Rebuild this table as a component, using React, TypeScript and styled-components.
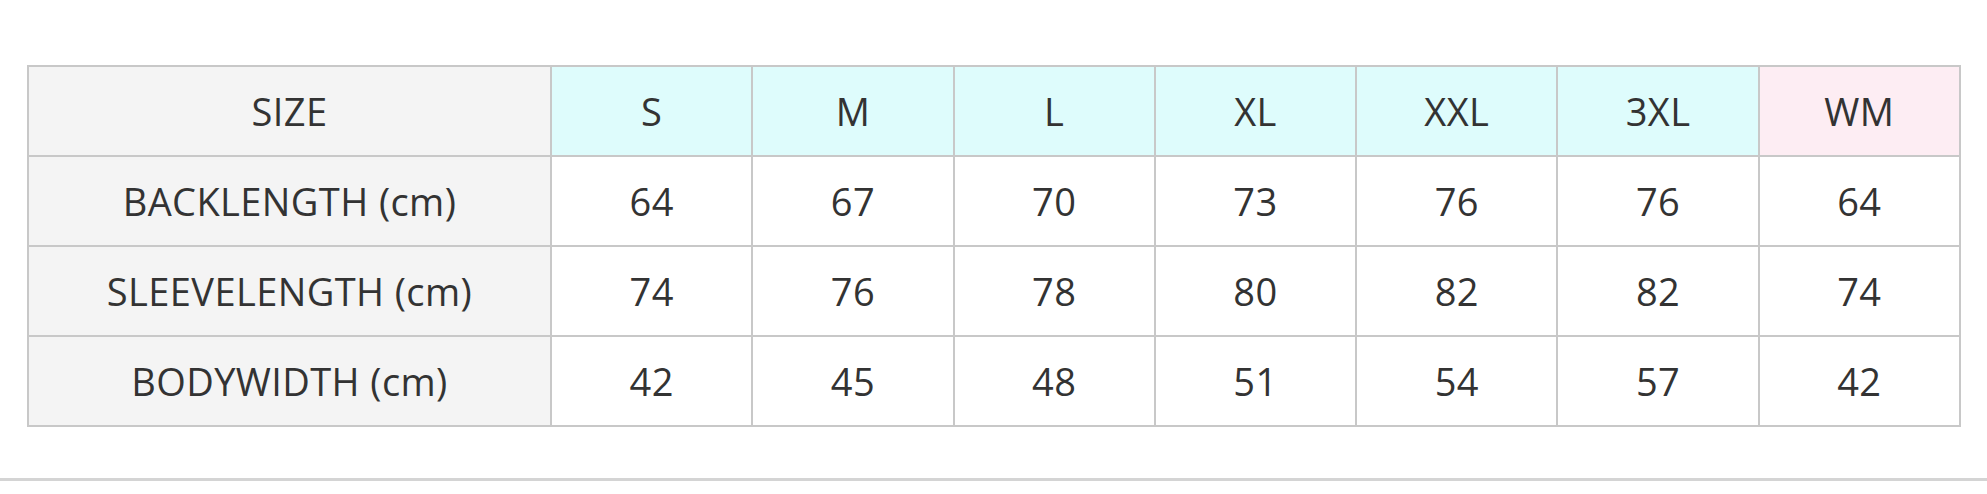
import React from "react";
import styled, { createGlobalStyle } from "styled-components";

const Global = createGlobalStyle`
  html, body { margin: 0; padding: 0; background: #ffffff; }
  body { font-family: "Open Sans", "Noto Sans", sans-serif; color: #333333; }
`;

const Page = styled.div`
  width: 1987px;
  padding-top: 65px;
`;

const TableWrap = styled.div`
  padding: 0 26px 0 27px;
`;

const Table = styled.table`
  width: 100%;
  border-collapse: collapse;
  table-layout: fixed;
  border: 2px solid #c8c8c8;
`;

const Cell = styled.td<{ $bg: string }>`
  height: 88px;
  border: 2px solid #c8c8c8;
  background: ${(p) => p.$bg};
  text-align: center;
  vertical-align: middle;
  font-size: 38px;
  font-weight: 400;
  letter-spacing: 0.4px;
  line-height: 1;
  color: #333333;
  padding: 0;
`;

const Divider = styled.div`
  margin-top: 51px;
  height: 3px;
  background: #d4d4d4;
`;

const sizes = ["S", "M", "L", "XL", "XXL", "3XL", "WM"];
const rows: [string, number[]][] = [
  ["BACKLENGTH (cm)", [64, 67, 70, 73, 76, 76, 64]],
  ["SLEEVELENGTH (cm)", [74, 76, 78, 80, 82, 82, 74]],
  ["BODYWIDTH (cm)", [42, 45, 48, 51, 54, 57, 42]],
];

export default function App() {
  return (
    <Page>
      <Global />
      <TableWrap>
        <Table>
          <colgroup>
            <col style={{ width: 523 }} />
            {sizes.map((s) => (
              <col key={s} />
            ))}
          </colgroup>
          <tbody>
            <tr>
              <Cell as="th" $bg="#f4f4f4">
                SIZE
              </Cell>
              {sizes.map((s) => (
                <Cell as="th" key={s} $bg={s === "WM" ? "#fdedf3" : "#defcfc"}>
                  {s}
                </Cell>
              ))}
            </tr>
            {rows.map(([label, vals]) => (
              <tr key={label}>
                <Cell $bg="#f4f4f4">{label}</Cell>
                {vals.map((v, i) => (
                  <Cell key={i} $bg="#ffffff">
                    {v}
                  </Cell>
                ))}
              </tr>
            ))}
          </tbody>
        </Table>
      </TableWrap>
      <Divider />
    </Page>
  );
}
